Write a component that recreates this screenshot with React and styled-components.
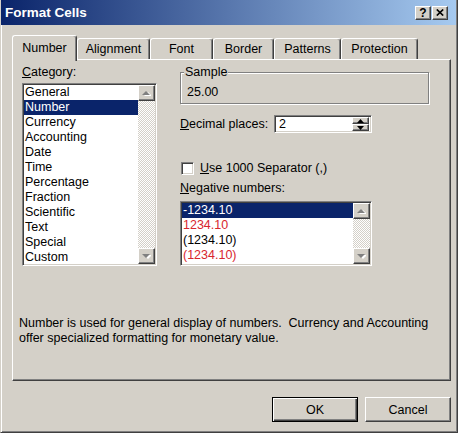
import React from 'react';
import styled, { createGlobalStyle, css } from 'styled-components';

const GlobalStyle = createGlobalStyle`
  html, body {
    margin: 0;
    padding: 0;
    background: #fff;
  }
  body {
    font-family: "Liberation Sans", Arial, sans-serif;
    font-size: 12.5px;
    color: #000;
  }
`;

const raised = css`
  border: 1px solid;
  border-color: #fff #404040 #404040 #fff;
  box-shadow: inset -1px -1px #808080, inset 1px 1px #d4d0c8;
  background: #d4d0c8;
`;

const sunken = css`
  border: 1px solid;
  border-color: #808080 #fff #fff #808080;
  box-shadow: inset 1px 1px #404040, inset -1px -1px #d4d0c8;
  background: #fff;
`;

const Window = styled.div`
  width: 458px;
  height: 433px;
  box-sizing: border-box;
  background: #d4d0c8;
  border-left: 1px solid #d4d0c8;
  border-right: 1px solid #404040;
  border-bottom: 1px solid #404040;
  box-shadow: inset 1px 0 #fff, inset -1px -1px #808080;
  display: flex;
  flex-direction: column;
`;

const TitleBar = styled.div`
  height: 25px;
  margin-right: 1px;
  display: flex;
  align-items: center;
  padding: 0 8px 0 4px;
  background: linear-gradient(to right, #0a246a, #a6caf0);
`;

const Title = styled.div`
  flex: 1;
  color: #fff;
  font-weight: bold;
  font-size: 13.5px;
  line-height: 16px;
`;

const CaptionButtons = styled.div`
  display: flex;
  gap: 1px;
`;

const CaptionButton = styled.div`
  ${raised};
  box-sizing: border-box;
  width: 16px;
  height: 14px;
  display: flex;
  align-items: center;
  justify-content: center;
  font-weight: bold;
  font-size: 12px;
  line-height: 12px;
`;

const Body = styled.div`
  padding: 10px 0 0 11px;
  display: flex;
  flex-direction: column;
`;

const TabStrip = styled.div`
  display: flex;
  align-items: flex-end;
  height: 26px;
  margin-bottom: -2px;
  position: relative;
  z-index: 1;
`;

const Tab = styled.div`
  box-sizing: border-box;
  width: ${p => p.$w}px;
  height: ${p => (p.$active ? 26 : 21)}px;
  margin-bottom: ${p => (p.$active ? 0 : 2)}px;
  padding-top: ${p => (p.$active ? 5 : 3)}px;
  border-top: 1px solid #fff;
  border-left: 1px solid #fff;
  border-right: 1px solid #404040;
  border-radius: 3px 3px 0 0;
  box-shadow: inset -1px 0 #808080;
  background: #d4d0c8;
  text-align: center;
  line-height: 15px;
`;

const Panel = styled.div`
  box-sizing: border-box;
  width: 439px;
  height: 322px;
  padding: 5px 0 0 6px;
  border-top: 1px solid #fff;
  border-left: 1px solid #fff;
  border-right: 1px solid #404040;
  border-bottom: 1px solid #404040;
  box-shadow: inset -1px -1px #808080;
`;

const TopArea = styled.div`
  display: grid;
  grid-template-columns: 135px 1fr;
  column-gap: 23px;
  margin-left: 3px;
`;

const Column = styled.div`
  display: flex;
  flex-direction: column;
`;

const Label = styled.div`
  line-height: 15px;
  white-space: nowrap;
`;

const ListBox = styled.div`
  ${sunken};
  box-sizing: border-box;
  width: ${p => p.$w}px;
  height: ${p => p.$h}px;
  margin-top: ${p => p.$top}px;
  padding: 1px 1px 0 1px;
  display: flex;
  overflow: hidden;
`;

const Items = styled.div`
  flex: 1;
  overflow: hidden;
`;

const Item = styled.div`
  line-height: 15px;
  padding-left: 1px;
  white-space: nowrap;
  color: ${p => (p.$selected ? '#fff' : p.$red ? '#d8262e' : '#000')};
  background: ${p => (p.$selected ? '#0a246a' : 'transparent')};
`;

const ScrollBar = styled.div`
  width: 17px;
  flex: none;
  margin-bottom: 1px;
  display: flex;
  flex-direction: column;
  justify-content: space-between;
  background: repeating-conic-gradient(#fff 0% 25%, #d4d0c8 0% 50%) 0 0 / 2px 2px;
`;

const ScrollButton = styled.div`
  ${raised};
  box-sizing: border-box;
  height: 16px;
  display: flex;
  align-items: center;
  justify-content: center;
`;

const GroupBox = styled.fieldset`
  margin: 0;
  width: 249px;
  box-sizing: border-box;
  padding: 5px 6px 3px 6px;
  border: 1px solid #808080;
  box-shadow: inset 1px 1px #fff, 1px 1px #fff;
  line-height: 15px;

  legend {
    padding: 0 1px;
    margin-left: -3px;
    background: #d4d0c8;
    line-height: 15px;
  }
`;

const FieldRow = styled.div`
  display: grid;
  grid-template-columns: 94px 98px;
  align-items: center;
  margin-top: 11px;
`;

const SpinBox = styled.div`
  ${sunken};
  box-sizing: border-box;
  height: 18px;
  padding: 2px 2px 2px 4px;
  display: flex;
  align-items: center;
  line-height: 14px;
`;

const SpinValue = styled.div`
  flex: 1;
`;

const SpinButtons = styled.div`
  width: 17px;
  height: 14px;
  display: flex;
  flex-direction: column;
`;

const SpinButton = styled.div`
  ${raised};
  box-sizing: border-box;
  flex: 1;
  display: flex;
  align-items: center;
  justify-content: center;
`;

const CheckRow = styled.label`
  display: flex;
  align-items: center;
  gap: 6px;
  margin-top: 28px;
  margin-left: 1px;
  line-height: 15px;
`;

const CheckBox = styled.span`
  ${sunken};
  box-sizing: border-box;
  width: 13px;
  height: 13px;
`;

const SpacedLabel = styled(Label)`
  margin-top: 5px;
`;

const Description = styled.p`
  margin: 50px 0 0 0;
  width: 420px;
  line-height: 15px;
`;

const ButtonRow = styled.div`
  width: 439px;
  margin-top: 16px;
  display: flex;
  justify-content: flex-end;
  gap: 7px;
`;

const Button = styled.div`
  box-sizing: border-box;
  width: 86px;
  height: 25px;
  display: flex;
  align-items: center;
  justify-content: center;
  background: #d4d0c8;
  ${p =>
    p.$default
      ? css`
          border: 1px solid #000;
          box-shadow: inset 1px 1px #fff, inset -1px -1px #404040, inset -2px -2px #808080;
        `
      : raised};
`;

const Arrow = ({ up }) => (
  <svg width="9" height="6" viewBox="0 0 9 6">
    <path d={up ? 'M5 1 9 5H1z' : 'M1 1h8L5 5z'} transform="translate(1 1)" fill="#fff" />
    <path d={up ? 'M4 1 8 5H0z' : 'M0 1h8L4 5z'} fill="#808080" />
  </svg>
);

const SmallArrow = ({ up }) => (
  <svg width="7" height="4" viewBox="0 0 7 4">
    <path d={up ? 'M3.5 0 7 4H0z' : 'M0 0h7L3.5 4z'} fill="#000" />
  </svg>
);

const tabs = [
  { name: 'Number', w: 65 },
  { name: 'Alignment', w: 73 },
  { name: 'Font', w: 63 },
  { name: 'Border', w: 61 },
  { name: 'Patterns', w: 67 },
  { name: 'Protection', w: 77 },
];

const categories = [
  'General', 'Number', 'Currency', 'Accounting', 'Date', 'Time',
  'Percentage', 'Fraction', 'Scientific', 'Text', 'Special', 'Custom',
];

const negatives = [
  { text: '-1234.10', red: false },
  { text: '1234.10', red: true },
  { text: '(1234.10)', red: false },
  { text: '(1234.10)', red: true },
];

const description =
  'Number is used for general display of numbers.\u00a0 Currency and Accounting offer specialized formatting for monetary value.';

function Scroll() {
  return (
    <ScrollBar>
      <ScrollButton><Arrow up /></ScrollButton>
      <ScrollButton><Arrow /></ScrollButton>
    </ScrollBar>
  );
}

export default function App() {
  return (
    <>
      <GlobalStyle />
      <Window>
        <TitleBar>
          <Title>Format Cells</Title>
          <CaptionButtons>
            <CaptionButton>?</CaptionButton>
            <CaptionButton>
              <svg width="8" height="7" viewBox="0 0 8 7">
                <path d="M0.8 0.5 7.2 6.5M7.2 0.5 0.8 6.5" stroke="#000" strokeWidth="1.7" />
              </svg>
            </CaptionButton>
          </CaptionButtons>
        </TitleBar>
        <Body>
          <TabStrip>
            {tabs.map(t => (
              <Tab key={t.name} $w={t.w} $active={t.name === 'Number'}>{t.name}</Tab>
            ))}
          </TabStrip>
          <Panel>
            <TopArea>
              <Column>
                <Label><u>C</u>ategory:</Label>
                <ListBox $w={135} $h={183} $top={3}>
                  <Items>
                    {categories.map(c => (
                      <Item key={c} $selected={c === 'Number'}>{c}</Item>
                    ))}
                  </Items>
                  <Scroll />
                </ListBox>
              </Column>
              <Column>
                <GroupBox>
                  <legend>Sample</legend>
                  25.00
                </GroupBox>
                <FieldRow>
                  <Label><u>D</u>ecimal places:</Label>
                  <SpinBox>
                    <SpinValue>2</SpinValue>
                    <SpinButtons>
                      <SpinButton><SmallArrow up /></SpinButton>
                      <SpinButton><SmallArrow /></SpinButton>
                    </SpinButtons>
                  </SpinBox>
                </FieldRow>
                <CheckRow>
                  <CheckBox />
                  <span><u>U</u>se 1000 Separator (,)</span>
                </CheckRow>
                <SpacedLabel><u>N</u>egative numbers:</SpacedLabel>
                <ListBox $w={192} $h={65} $top={5}>
                  <Items>
                    {negatives.map((n, i) => (
                      <Item key={i} $selected={i === 0} $red={n.red}>{n.text}</Item>
                    ))}
                  </Items>
                  <Scroll />
                </ListBox>
              </Column>
            </TopArea>
            <Description>{description}</Description>
          </Panel>
          <ButtonRow>
            <Button $default>OK</Button>
            <Button>Cancel</Button>
          </ButtonRow>
        </Body>
      </Window>
    </>
  );
}
